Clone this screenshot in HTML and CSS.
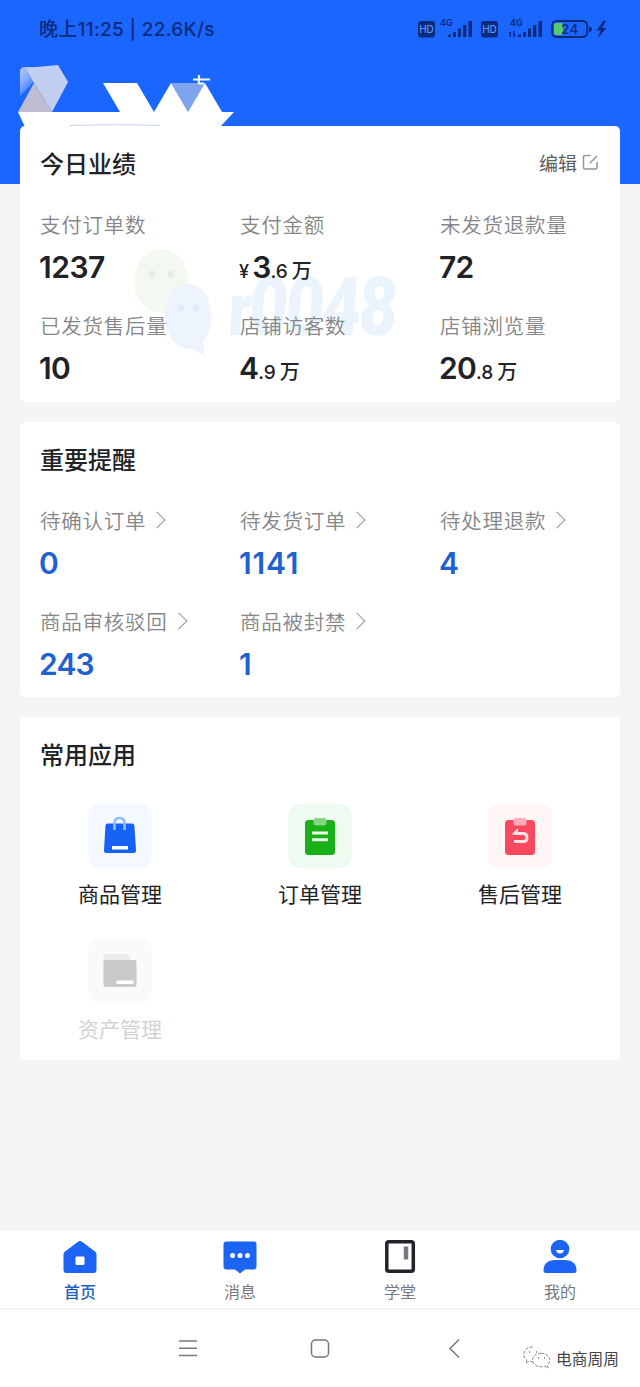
FILE: index.html
```html
<!DOCTYPE html>
<html lang="zh-CN">
<head>
<meta charset="utf-8">
<title>商家首页</title>
<link rel="stylesheet" href="styles.css">
</head>
<body>
<div class="phone">
  <header class="status">
    <span class="status-time">晚上11:25 | 22.6K/s</span>
    <svg class="status-icons" width="192" height="28" viewBox="416 15 192 28">
      <g fill="#0a2a7c">
        <rect x="418" y="21" width="17" height="16.500" rx="3"/>
        <rect x="481" y="21" width="17" height="16.500" rx="3"/>
        <path d="M448 37v-2l3-1v3zM453 37v-5h3v5zM458 37v-8.500h3v8.500zM463 37v-12h3.300v12zM468.500 37v-16h3.500v16z"/>
        <path d="M518 37v-2l3-1v3zM523 37v-5h3v5zM528 37v-8.500h3v8.500zM533 37v-12h3.300v12zM538.500 37v-16h3.500v16z"/>
        <path d="M508.500 32l2.500 0v5h-1.500v-4zM513 31h1.500v4l1-1v2l-2.500 1z"/>
        <path d="M589 26.500q3 .5 3 2.700t-3 2.700zM603.500 20.500l-7 10h4l-2.500 7.500 8.500-10h-4.500l4-7z"/>
        <text x="440" y="26" class="net">4G</text>
        <text x="510" y="26" class="net">4G</text>
      </g>
      <text x="426.500" y="33.200" class="hd">HD</text>
      <text x="489.500" y="33.200" class="hd">HD</text>
      <rect x="552.200" y="21" width="35" height="16" rx="4.500" fill="none" stroke="#0a2a7c" stroke-width="2"/>
      <rect x="554" y="23" width="9" height="12" rx="2" fill="#58c96d"/>
      <text x="570" y="34" class="charge">24</text>
    </svg>
  </header>

  <svg class="shop" width="240" height="66" viewBox="0 60 240 66">
    <defs><filter id="soft" x="-20%" y="-20%" width="140%" height="140%"><feGaussianBlur stdDeviation="0.7"/></filter>
    <linearGradient id="fade" x1="0" x2=".6" y1="0" y2="1"><stop offset="0" stop-color="#b8cdfa"/><stop offset=".5" stop-color="#7ea6fb"/><stop offset="1" stop-color="#1a66fe"/></linearGradient></defs>
    <path d="M20 96V72q0-5 5-5h12l-4 16z" fill="url(#fade)"/>
    <g filter="url(#soft)">
      <path d="M26 68l32-3 10 17-16 30-18-29z" fill="#c3cff1"/>
      <path d="M34 83l18 29H18z" fill="#bdbcd2"/>
      <path d="M18 112H234L220 127H25z" fill="#fff"/>
    </g>
    <path d="M171 83h34l-17 29z" fill="#7ea5ec"/>
    <path d="M103 83h34l17 29H120zM171 83l17 29h-34zM205 83l17 29h-34z" fill="#fff"/>
    <path d="M193 79.500h17M199 75v5q-1 3.500 1 3.500h4" fill="none" stroke="#f1f6ff" stroke-width="2.200"/>
    <path d="M70 125.500q50-1.500 90 0" stroke="#c5d2ec" fill="none"/>
  </svg>

  <main class="cards">
    <section class="card performance">
      <svg class="watermark" width="270" height="120" viewBox="130 245 270 120" aria-hidden="true">
        <ellipse cx="161" cy="281" rx="27" ry="32" fill="#f3f9f1"/>
        <circle cx="152" cy="274" r="3.500" fill="#e6ede4"/><circle cx="171" cy="274" r="3.500" fill="#e6ede4"/>
        <path d="M188 284c15 0 23 15 23 33 0 12-4 21-8 25l2 14-12-7c-17 1-28-15-28-33 0-18 9-32 23-32z" fill="#edf4fe"/>
        <circle cx="181" cy="308" r="3" fill="#dfe9f7"/><circle cx="196" cy="308" r="3" fill="#dfe9f7"/>
        <text transform="translate(227 335) skewX(-4) scale(.82 1)" class="mark"><tspan class="mark-r">r</tspan><tspan>0048</tspan></text>
      </svg>
      <div class="card-head"><h2>今日业绩</h2><a class="edit">编辑
        <svg width="17" height="17" viewBox="0 0 17 17"><path d="M8.500 1.500H3Q1.500 1.500 1.500 3v10.500Q1.500 15 3 15h10.500q1.500 0 1.500-1.500V8M8 9l7-7" fill="none" stroke="#969696" stroke-width="1.500"/></svg></a></div>
      <div class="stats">
        <div><p class="label">支付订单数</p><p class="num wide">1237</p></div>
        <div><p class="label">支付金额</p><p class="num"><i>¥</i>3<small>.6<b>万</b></small></p></div>
        <div><p class="label">未发货退款量</p><p class="num">72</p></div>
        <div><p class="label">已发货售后量</p><p class="num">10</p></div>
        <div><p class="label">店铺访客数</p><p class="num">4<small>.9<b>万</b></small></p></div>
        <div><p class="label">店铺浏览量</p><p class="num">20<small>.8<b>万</b></small></p></div>
      </div>
    </section>

    <section class="card reminders">
      <div class="card-head"><h2>重要提醒</h2></div>
      <div class="stats">
        <div><p class="label more">待确认订单</p><p class="num">0</p></div>
        <div><p class="label more">待发货订单</p><p class="num wider">1141</p></div>
        <div><p class="label more">待处理退款</p><p class="num">4</p></div>
        <div><p class="label more">商品审核驳回</p><p class="num">243</p></div>
        <div><p class="label more">商品被封禁</p><p class="num">1</p></div>
      </div>
    </section>

    <section class="card apps-card">
      <div class="card-head"><h2>常用应用</h2></div>
      <div class="apps">
        <div class="app"><span class="tile blue"><svg width="64" height="64" viewBox="0 0 64 64">
          <path d="M19 19.500h25q2 0 2.400 2L48 46q.3 3-2.500 3h-27q-2.800 0-2.500-3l1.500-24.500q.2-2 2-2z" fill="#1762f5"/>
          <path d="M26.500 26v-7q0-5 5-5t5 5v7" fill="none" stroke="#93bcfa" stroke-width="2.600"/><rect x="24" y="42" width="16" height="3.500" rx=".5" fill="#fff"/></svg></span>商品管理</div>
        <div class="app"><span class="tile green"><svg width="64" height="64" viewBox="0 0 64 64">
          <rect x="17" y="16" width="30" height="35" rx="3.500" fill="#18af19"/><rect x="25.500" y="14" width="13" height="7.500" rx="2.500" fill="#82d481"/><path d="M24 29h16M24 35.700h16" stroke="#e9ffe7" stroke-width="3"/></svg></span>订单管理</div>
        <div class="app"><span class="tile red"><svg width="64" height="64" viewBox="0 0 64 64">
          <rect x="17" y="16" width="30" height="35" rx="3.500" fill="#f9495f"/><rect x="25.500" y="14" width="13" height="7.500" rx="2" fill="#ffabb8"/><path d="M27 29.500H35.500q3.500 0 3.500 4t-3.500 4H26" fill="none" stroke="#ffe3e7" stroke-width="3"/><path d="M23.500 30.500l6.500-6.500v7z" fill="#ffe3e7"/></svg></span>售后管理</div>
        <div class="app disabled"><span class="tile gray"><svg width="64" height="64" viewBox="0 0 64 64">
          <path d="M15.500 15h23q2 0 3 2l2 6v5h-28z" fill="#eaebec"/><rect x="15.500" y="21" width="33" height="27" rx="2.500" fill="#c8c9cb"/><rect x="28.500" y="41.500" width="17" height="3.500" rx=".5" fill="#fff"/></svg></span>资产管理</div>
      </div>
    </section>
  </main>

  <nav class="tabs">
    <a class="tab active"><svg width="36" height="36" viewBox="0 0 36 36"><path d="M16 2.800q2-1.600 4 0L33 12.500q1.500 1.200 1.500 3V31q0 3-3 3h-27q-3 0-3-3V15.500q0-1.800 1.500-3z" fill="#1c64f4"/><rect x="13.500" y="17.500" width="9" height="8.500" rx="1" fill="#fff"/></svg>首页</a>
    <a class="tab"><svg width="36" height="36" viewBox="0 0 36 36"><path d="M4.500 2.500h27q3 0 3 3v22q0 3-3 3h-8.500L18 34.500l-5-4H4.500q-3 0-3-3v-22q0-3 3-3z" fill="#1c64f4"/><g fill="#fff"><circle cx="10.500" cy="16.500" r="2.500"/><circle cx="18" cy="16.500" r="2.500"/><circle cx="25.500" cy="16.500" r="2.500"/></g></svg>消息</a>
    <a class="tab"><svg width="36" height="36" viewBox="0 0 36 36"><rect x="4.800" y="2.800" width="26.500" height="29.500" rx="2" fill="#fff" stroke="#222429" stroke-width="3.500"/><path d="M24 7.500v13" stroke="#77797c" stroke-width="4.500"/></svg>学堂</a>
    <a class="tab"><svg width="36" height="36" viewBox="0 0 36 36"><circle cx="18" cy="10" r="9.300" fill="#1c64f4"/><path d="M1.500 31.500C1.500 24.500 6 21 13 21h10c7 0 11.500 3.500 11.500 10.500q0 2.500-2.500 2.500H4q-2.500 0-2.500-2.500z" fill="#1c64f4"/><path d="M14 11h8q-.8 3.500-4 3.500T14 11z" fill="#fff"/></svg>我的</a>
  </nav>

  <footer class="system">
    <svg class="system-keys" width="290" height="24" viewBox="176 1336 290 24" fill="none" stroke="#777" stroke-width="1.500"><path d="M179 1341h18M179 1348.300h18M179 1355.600h18"/><rect x="311.500" y="1340" width="17" height="17" rx="4"/><path d="M459 1339.500l-9 9 9 9"/></svg>
    <div class="account"><svg width="28" height="24" viewBox="0 0 28 24" fill="#fff" stroke="#777" stroke-width=".9" stroke-dasharray="3 1.500"><path d="M9.500 1C4 1 .8 4.500.8 8.500c0 2.200 1 4 3 5.500L3 17l3.500-1.800q2 .6 4 .4"/><path d="M18 7.200c-5 0-8.500 3-8.500 6.700s3.500 6.800 8.500 6.800q1.800 0 3.500-.5l3.500 1.900-.8-3q2.600-2 2.600-5.200C26.800 10.200 23 7.200 18 7.200z"/><path d="M6 6h1M13 6h1M15 12h1M21 12h1" stroke-dasharray="none" stroke-width="1.400"/></svg>电商周周</div>
  </footer>
</div>
</body>
</html>
```
FILE: styles.css
```css
* { box-sizing: border-box; }
body { margin: 0; font-family: "Noto Sans CJK SC", sans-serif; color: #212226; }
p, h2 { margin: 0; }
svg { display: block; flex: none; }
.phone { width: 640px; height: 1387px; display: flex; flex-direction: column; background: linear-gradient(#1a66fe 184px, #f4f5f7 184px); }
.status { height: 60px; flex: none; display: flex; justify-content: space-between; padding: 15px 32px 0 39px; color: #0a2a7c; }
.status-time { font: 500 19px/30px Inter, "Noto Sans CJK SC", sans-serif; letter-spacing: .3px; white-space: nowrap; }
.net { font: 600 9px Inter, sans-serif; }
.hd { font: 500 10px Inter, sans-serif; fill: #5a98ff; text-anchor: middle; }
.charge { font: 500 13.500px Inter, sans-serif; fill: #0a2a7c; text-anchor: middle; letter-spacing: .5px; }
.shop { height: 66px; flex: none; }
.cards { flex: 1; padding: 0 20px; }
.card { position: relative; background: #fff; border-radius: 5px; padding: 18px 20px 0; margin-bottom: 20px; }
.performance { height: 276px; }
.reminders { height: 275px; }
.apps-card { height: 343px; }
.card-head { display: flex; justify-content: space-between; align-items: center; height: 36px; position: relative; }
h2 { font-size: 24px; font-weight: 500; line-height: 36px; padding-top: 1px; }
.edit { display: flex; align-items: center; gap: 5px; font-size: 19px; color: #5d5e60; margin-right: 1px; }
.watermark { position: absolute; left: 110px; top: 119px; overflow: visible; }
.mark { font: 900 82px/1 Roboto, sans-serif; fill: #ebf4fd; letter-spacing: -3px; }
.mark-r { font-size: 74px; }
.stats { position: relative; display: grid; grid-template-columns: repeat(3, 200px); row-gap: 26px; margin: 29px -40px 0 0; }
.label { font-size: 20.500px; line-height: 30px; letter-spacing: .75px; color: #858688; font-weight: 350; white-space: nowrap; }
.more { display: flex; align-items: center; }
.more::after { content: ""; width: 11px; height: 11px; margin-left: 5px; border: solid #999; border-width: 1.500px 1.500px 0 0; transform: rotate(45deg); }
.num { display: flex; align-items: baseline; height: 36px; margin: 10px 0 -1px -1px; font: 600 30px/36px Inter, "Noto Sans CJK SC", sans-serif; letter-spacing: -.8px; }
.wide { letter-spacing: -.5px; }
.wider { letter-spacing: .8px; }
.num i { font: 500 18px/36px Inter, sans-serif; margin-right: 4px; }
.num small { font: 500 19px/36px Inter, "Noto Sans CJK SC", sans-serif; letter-spacing: 0; }
.num b { font: 500 20px/36px "Noto Sans CJK SC", sans-serif; margin-left: 4px; }
.reminders .num { color: #1f62cf; }
.apps { display: grid; grid-template-columns: repeat(3, 200px); row-gap: 26px; margin: 32px -20px 0; }
.app { height: 109px; display: flex; flex-direction: column; align-items: center; font-size: 21px; line-height: 32px; gap: 9px; }
.tile { width: 64px; height: 64px; border-radius: 12px; margin-top: 1px; }
.blue { background: #f3f9fe; }
.green { background: #effbf0; }
.red { background: #fff6f6; }
.gray { background: #fafafa; }
.disabled { color: #d2d3d4; }
.tabs { height: 80px; flex: none; display: grid; grid-template-columns: repeat(4, 1fr); background: #fff; border-bottom: 2px solid #f2f3f5; border-top: 1px solid #f4f5f7; }
.tab { display: flex; flex-direction: column; align-items: center; padding-top: 8px; gap: 4px; font-size: 16px; line-height: 24px; color: #77787b; }
.active { color: #1d62bc; font-weight: 500; }
.system { height: 77px; flex: none; display: flex; background: #fff; padding: 26px 20px 0 176px; }
.account { display: flex; align-items: center; gap: 5px; height: 28px; margin: 8px 0 0 57px; font-size: 15.750px; color: #444; white-space: nowrap; }
```
